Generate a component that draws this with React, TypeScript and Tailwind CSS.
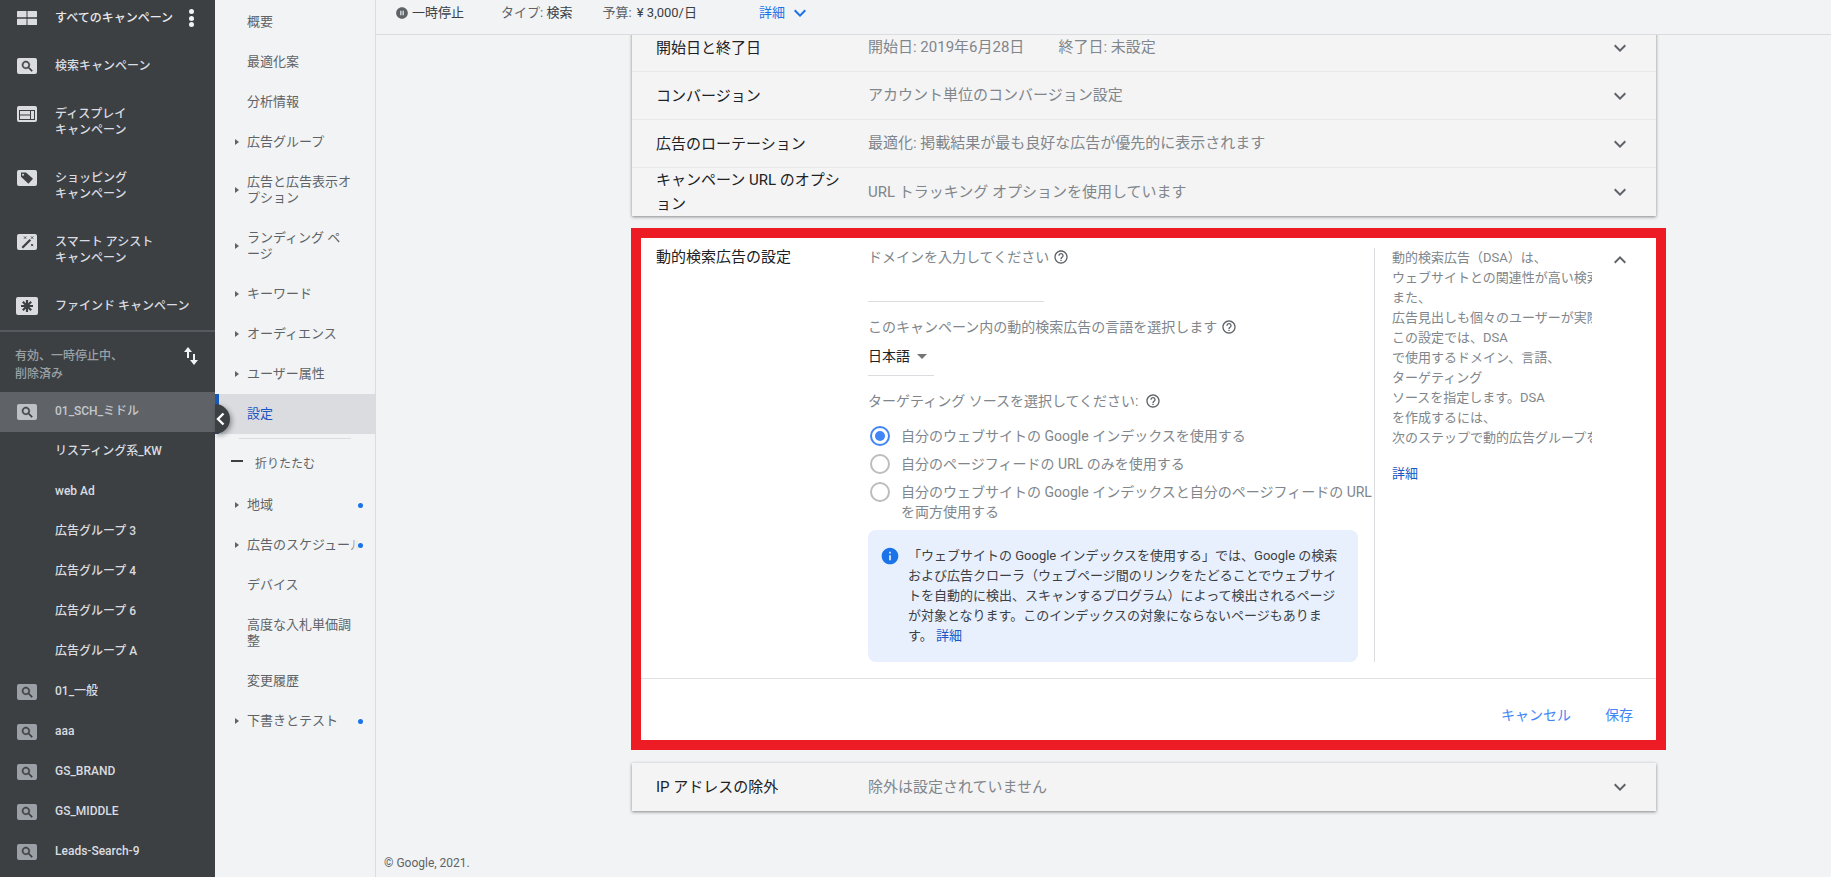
import React from "react";

const SEARCH = "M15.5 14h-.79l-.28-.27C15.41 12.59 16 11.11 16 9.5 16 5.91 13.09 3 9.5 3S3 5.91 3 9.5 5.91 16 9.5 16c1.61 0 3.09-.59 4.23-1.57l.27.28v.79l5 4.99L20.49 19l-4.99-5zm-6 0C7.01 14 5 11.99 5 9.5S7.01 5 9.5 5 14 7.01 14 9.5 11.99 14 9.5 14z";
const HELP = "M11 18h2v-2h-2v2zm1-16C6.48 2 2 6.48 2 12s4.48 10 10 10 10-4.48 10-10S17.52 2 12 2zm0 18c-4.41 0-8-3.59-8-8s3.59-8 8-8 8 3.59 8 8-3.59 8-8 8zm0-14c-2.21 0-4 1.79-4 4h2c0-1.1.9-2 2-2s2 .9 2 2c0 2-3 1.75-3 5h2c0-2.25 3-2.5 3-5 0-2.21-1.79-4-4-4z";
const CHEV = "M7.41 8.59L12 13.17l4.59-4.58L18 10l-6 6-6-6z";

function Chip({ color = "#dadce0", children }: { color?: string; children: React.ReactNode }) {
  return (
    <svg width="20" height="16" viewBox="0 0 20 16" className="shrink-0">
      <rect width="20" height="16" rx="2" fill={color} />
      {children}
    </svg>
  );
}

function SearchChip({ color }: { color?: string }) {
  return (
    <Chip color={color}>
      <g transform="translate(3.2,1.2) scale(0.6)">
        <path d={SEARCH} fill="#3c4043" stroke="#3c4043" strokeWidth="0.8" />
      </g>
    </Chip>
  );
}

function GridIcon() {
  return (
    <svg width="20" height="14" viewBox="0 0 20 14" className="shrink-0">
      <rect width="9.5" height="6.2" rx="0.5" fill="#dadce0" />
      <rect x="10.5" width="9.5" height="6.2" rx="0.5" fill="#dadce0" />
      <rect y="7.8" width="9.5" height="6.2" rx="0.5" fill="#dadce0" />
      <rect x="10.5" y="7.8" width="9.5" height="6.2" rx="0.5" fill="#dadce0" />
    </svg>
  );
}

function DisplayIcon() {
  return (
    <Chip>
      <rect x="2" y="4" width="16" height="10" fill="#3c4043" />
      <rect x="3" y="5" width="10" height="3.5" fill="#dadce0" />
      <rect x="3" y="9.5" width="10" height="3.5" fill="#dadce0" />
      <rect x="14" y="5" width="3" height="8" fill="#dadce0" />
    </Chip>
  );
}

function TagIcon() {
  return (
    <Chip>
      <path d="M4 2.500h5l7 6.200-4.600 5L4 6.800z" fill="#3c4043" />
      <circle cx="6" cy="4.800" r="1" fill="#dadce0" />
    </Chip>
  );
}

function WandIcon() {
  return (
    <Chip>
      <path d="M4.500 13 12.500 5l1.600 1.600-8 8z" fill="#3c4043" />
      <path d="M7 2.500l2.200 2.200M9.200 2.500 7 4.700M14 2.500l2.200 2.200M16.200 2.500 14 4.700M14 10l2.200 2.200M16.200 10 14 12.200" stroke="#3c4043" strokeWidth="0.9" />
    </Chip>
  );
}

function AsteriskIcon() {
  return (
    <svg width="22" height="18" viewBox="0 0 22 18" className="shrink-0 -ml-px">
      <rect width="22" height="18" rx="2" fill="#dadce0" />
      <path d="M11 3v12M5 9h12M6.800 4.800l8.400 8.400M15.200 4.800l-8.400 8.400" stroke="#3c4043" strokeWidth="2.200" />
    </svg>
  );
}

function NavRow({ icon, className = "", text, h = "h-[40px]", sel = false, top = false, lift = false }: { icon?: React.ReactNode; className?: string; text: React.ReactNode; h?: string; sel?: boolean; top?: boolean; lift?: boolean }) {
  return (
    <div className={`flex items-center pl-[17px] ${h} ${sel ? "bg-[#5f6368] text-[#c4c7cb]" : "text-[#dadce0]"} ${className}`}>
      <div className={`w-[38px] shrink-0 flex items-center ${top ? "self-start mt-[17px]" : ""}`}>{icon}</div>
      <div className={`text-[12px] leading-[16px] font-medium ${top ? "pt-[2px]" : ""} ${lift ? "pb-[2px]" : ""}`}>{text}</div>
    </div>
  );
}

function Sidebar() {
  return (
    <div className="w-[215px] shrink-0 bg-[#3c4043] h-full overflow-hidden">
      <div className="relative flex items-center pl-[17px] h-[36px] text-[#e8eaed]">
        <div className="w-[38px] shrink-0 flex items-center"><GridIcon /></div>
        <div className="text-[12px] leading-[16px] font-medium">すべてのキャンペーン</div>
        <div className="ml-[16px] flex flex-col gap-[1.5px]">
          <div className="w-[5px] h-[5px] rounded-full bg-[#f1f3f4]" />
          <div className="w-[5px] h-[5px] rounded-full bg-[#f1f3f4]" />
          <div className="w-[5px] h-[5px] rounded-full bg-[#f1f3f4]" />
        </div>
      </div>
      <NavRow className="mt-[10px]" icon={<SearchChip />} text="検索キャンペーン" />
      <NavRow className="mt-[3px]" top h="h-[64px]" icon={<DisplayIcon />} text={<>ディスプレイ<br />キャンペーン</>} />
      <NavRow top h="h-[64px]" icon={<TagIcon />} text={<>ショッピング<br />キャンペーン</>} />
      <NavRow top h="h-[64px]" icon={<WandIcon />} text={<>スマート アシスト<br />キャンペーン</>} />
      <NavRow className="mt-[1px]" h="h-[47px]" icon={<AsteriskIcon />} text="ファインド キャンペーン" />
      <div className="h-[2px] mt-[1px] bg-[#5f6368] opacity-70" />
      <div className="h-[60px] pl-[15px] pr-[17px] pt-[15px] flex justify-between text-[12px] leading-[18px] text-[#9aa0a6] font-medium">
        <div>有効、一時停止中、<br />削除済み</div>
        <svg width="14" height="18" viewBox="0 0 14 18">
          <path d="M4 0 0 5h3v6h2V5h3zM10 18l4-5h-3V7H9v6H6z" fill="#f1f3f4" />
        </svg>
      </div>
      <NavRow lift sel icon={<SearchChip color="#bdc1c6" />} text="01_SCH_ミドル" />
      <NavRow lift text="リスティング系_KW" />
      <NavRow lift text="web Ad" />
      <NavRow lift text="広告グループ 3" />
      <NavRow lift text="広告グループ 4" />
      <NavRow lift text="広告グループ 6" />
      <NavRow lift text="広告グループ A" />
      <NavRow lift icon={<SearchChip color="#9aa0a6" />} text="01_一般" />
      <NavRow lift icon={<SearchChip color="#9aa0a6" />} text="aaa" />
      <NavRow lift icon={<SearchChip color="#9aa0a6" />} text="GS_BRAND" />
      <NavRow lift icon={<SearchChip color="#9aa0a6" />} text="GS_MIDDLE" />
      <NavRow lift icon={<SearchChip color="#9aa0a6" />} text="Leads-Search-9" />
    </div>
  );
}

function SubRow({ text, arrow = false, h = "h-[40px]", dot = false, clip = false }: { text: React.ReactNode; arrow?: boolean; h?: string; dot?: boolean; clip?: boolean }) {
  return (
    <div className={`relative flex items-center pl-[20px] pr-[24px] ${h}`}>
      <div className="w-[12px] shrink-0 flex items-center">
        {arrow && <div className="w-0 h-0 border-y-[3px] border-y-transparent border-l-[4px] border-l-[#5f6368]" />}
      </div>
      <div className={`text-[13px] leading-[16px] text-[#5f6368] ${clip ? "relative shrink-0 whitespace-nowrap overflow-hidden w-[111px]" : ""}`}>
        {text}
        {clip && <div className="absolute right-0 top-0 h-full w-[8px] bg-gradient-to-r from-transparent to-[#f1f3f4]" />}
      </div>
      {dot && <div className="absolute left-[143px] top-[18px] w-[5px] h-[5px] rounded-full bg-[#1a73e8]" />}
    </div>
  );
}

function SubNav() {
  return (
    <div className="relative w-[161px] shrink-0 h-full bg-[#f1f3f4] border-r border-[#dadce0] pt-[2px]">
      <SubRow text="概要" />
      <SubRow text="最適化案" />
      <SubRow text="分析情報" />
      <SubRow arrow text="広告グループ" />
      <SubRow arrow h="h-[56px]" text="広告と広告表示オプション" />
      <SubRow arrow h="h-[56px]" text="ランディング ページ" />
      <SubRow arrow text="キーワード" />
      <SubRow arrow text="オーディエンス" />
      <SubRow arrow text="ユーザー属性" />
      <div className="relative h-[40px] bg-[#dadce0] flex items-center pl-[32px] text-[13px] text-[#1a56c4]">
        <div className="absolute left-0 top-0 h-full w-[4px] bg-[#185abc]" />
        設定
      </div>
      <div className="mt-[4px] ml-[24px] w-[112px] h-px bg-[#dadce0]" />
      <div className="h-[41px] mt-[5px] flex items-center pl-[16px] pb-[1px] text-[12px] text-[#5f6368]">
        <div className="w-[12px] h-[2px] -mt-[6px] bg-[#3c4043] mr-[12px]" />
        折りたたむ
      </div>
      <SubRow arrow dot text="地域" />
      <SubRow arrow dot clip text="広告のスケジュール" />
      <SubRow text="デバイス" />
      <SubRow h="h-[56px]" text="高度な入札単価調整" />
      <SubRow text="変更履歴" />
      <SubRow arrow dot text="下書きとテスト" />
      <div className="absolute left-0 top-[404px] w-[15px] h-[30px] rounded-r-[15px] bg-[#3c4043] shadow-[2px_2px_5px_rgba(0,0,0,0.35)] flex items-center justify-start">
        <svg width="11" height="14" viewBox="0 0 11 14"><path d="M8.500 1.500 3 7l5.500 5.500" fill="none" stroke="#fff" strokeWidth="2.400" /></svg>
      </div>
    </div>
  );
}

function Chevron({ up = false }: { up?: boolean }) {
  return (
    <svg width="24" height="24" viewBox="0 0 24 24" className={`shrink-0 ${up ? "rotate-180" : ""}`}>
      <path d={CHEV} fill="#5f6368" />
    </svg>
  );
}

function Help() {
  return (
    <svg width="16" height="16" viewBox="0 0 24 24" className="inline-block shrink-0 ml-[4px] align-[-3px]">
      <path d={HELP} fill="#5f6368" />
    </svg>
  );
}

function CardRow({ title, value, className = "" }: { title: React.ReactNode; value: React.ReactNode; className?: string }) {
  return (
    <div className={`flex items-center h-[48px] bg-[#f4f4f5] border-b border-[#e8e8e8] pl-[24px] pr-[24px] ${className}`}>
      <div className="w-[212px] pr-[20px] shrink-0 text-[15px] leading-[24px] text-[#202124]">{title}</div>
      <div className="flex-1 text-[15px] text-[#80868b]">{value}</div>
      <Chevron />
    </div>
  );
}

function Radio({ on = false, label }: { on?: boolean; label: string }) {
  return (
    <div className="flex items-start py-[4px] pl-[2px]">
      <div className={`w-[20px] h-[20px] rounded-full border-2 shrink-0 flex items-center justify-center ${on ? "border-[#4285f4]" : "border-[#bdbdbd]"}`}>
        {on && <div className="w-[10px] h-[10px] rounded-full bg-[#4285f4]" />}
      </div>
      <div className="ml-[11px] w-[473px] text-[14px] leading-[20px] text-[#80868b]">{label}</div>
    </div>
  );
}

const HELP_LINES = [
  "動的検索広告（DSA）は、",
  "ウェブサイトとの関連性が高い検索語句に広告を表示します。",
  "また、",
  "広告見出しも個々のユーザーが実際に検索した語句に合わせて生成されます。",
  "この設定では、DSA",
  "で使用するドメイン、言語、",
  "ターゲティング",
  "ソースを指定します。DSA",
  "を作成するには、",
  "次のステップで動的広告グループを作成します。",
];

function Main() {
  return (
    <div className="relative flex-1 min-w-0 h-full flex flex-col">
      <div className="h-[35px] shrink-0 bg-[#f1f3f4] border-b border-[#dadce0] relative z-10 flex items-center pl-[20px] pb-[9px] text-[13px] leading-[16px] text-[#5f6368]">
        <svg width="14" height="14" viewBox="0 0 24 24" className="shrink-0 -ml-px"><path d="M12 2C6.480 2 2 6.480 2 12s4.480 10 10 10 10-4.480 10-10S17.520 2 12 2zm-1 14H9V8h2v8zm4 0h-2V8h2v8z" fill="#5f6368" /></svg>
        <span className="ml-[3px] text-[#3c4043]">一時停止</span>
        <span className="ml-[37px]">タイプ: <span className="text-[#3c4043]">検索</span></span>
        <span className="ml-[30px]">予算: <span className="text-[#3c4043] ml-[2px]">¥ 3,000/日</span></span>
        <span className="ml-[62px] text-[#1a73e8]">詳細</span>
        <svg width="24" height="24" viewBox="0 0 24 24" className="ml-[3px] shrink-0"><path d={CHEV} fill="#1a73e8" /></svg>
      </div>

      <div className="flex-1 min-h-0 overflow-hidden flex flex-col">
        <div className="ml-[256px] w-[1024px] -mt-[11px] shadow-[0_1px_3px_rgba(60,64,67,0.6)]">
          <CardRow title="開始日と終了日" value={<>開始日: 2019年6月28日<span className="ml-[34px]">終了日: 未設定</span></>} />
          <CardRow title="コンバージョン" value="アカウント単位のコンバージョン設定" />
          <CardRow title="広告のローテーション" value="最適化: 掲載結果が最も良好な広告が優先的に表示されます" />
          <CardRow className="border-b-0" title="キャンペーン URL のオプション" value="URL トラッキング オプションを使用しています" />
        </div>

        <div className="ml-[255px] mt-[12px] w-[1035px] border-[10px] border-[#ed1c24] bg-white">
          <div className="flex pt-[10px] pb-[16px]">
            <div className="w-[227px] shrink-0 pl-[15px] -mt-[3px] text-[15px] leading-[24px] text-[#202124]">動的検索広告の設定</div>
            <div className="w-[506px] shrink-0 -mt-px">
              <div className="text-[14px] leading-[20px] text-[#80868b]">ドメインを入力してください<Help /></div>
              <div className="w-[176px] h-[35px] border-b border-[#dadce0]" />
              <div className="mt-[15px] text-[14px] leading-[20px] text-[#80868b]">このキャンペーン内の動的検索広告の言語を選択します<Help /></div>
              <div className="mt-[9px] w-[66px] pb-[9px] border-b border-[#dadce0] flex items-center text-[14px] leading-[20px] text-[#202124]">
                日本語
                <div className="ml-[7px] w-0 h-0 border-x-[5px] border-x-transparent border-t-[5px] border-t-[#757575]" />
              </div>
              <div className="mt-[15px] text-[14px] leading-[20px] text-[#80868b]">ターゲティング ソースを選択してください:<span className="ml-[3px]" /><Help /></div>
              <div className="mt-[11px]">
                <Radio on label="自分のウェブサイトの Google インデックスを使用する" />
                <Radio label="自分のページフィードの URL のみを使用する" />
                <Radio label="自分のウェブサイトの Google インデックスと自分のページフィードの URL を両方使用する" />
              </div>
              <div className="mt-[4px] w-[490px] h-[132px] rounded-[8px] bg-[#e8f0fe] flex pl-[14px] pr-[20px] py-[16px]">
                <svg width="20" height="20" viewBox="0 0 24 24" className="shrink-0 -ml-[2px] mr-[8px]"><path d="M12 2C6.480 2 2 6.480 2 12s4.480 10 10 10 10-4.480 10-10S17.520 2 12 2zm1 15h-2v-6h2v6zm0-8h-2V7h2v2z" fill="#1a73e8" /></svg>
                <div className="text-[13px] leading-[20px] text-[#3c4043]">
                  「ウェブサイトの Google インデックスを使用する」では、Google の検索および広告クローラ（ウェブページ間のリンクをたどることでウェブサイトを自動的に検出、スキャンするプログラム）によって検出されるページが対象となります。このインデックスの対象にならないページもあります。 <span className="text-[#1a56c4]">詳細</span>
                </div>
              </div>
            </div>
            <div className="w-px shrink-0 bg-[#dadce0]" />
            <div className="ml-[17px] w-[200px] shrink-0 overflow-hidden text-[13px] leading-[20px] text-[#80868b] whitespace-nowrap">
              {HELP_LINES.map((l) => <div key={l}>{l}</div>)}
              <div className="mt-[16px] text-[#1a56c4]">詳細</div>
            </div>
            <div className="ml-[16px]"><Chevron up /></div>
          </div>
          <div className="h-[62px] border-t border-[#e0e0e0] flex items-center justify-end pr-[23px] pt-[12px] text-[14px] text-[#4285f4]">
            <span>キャンセル</span>
            <span className="ml-[34px]">保存</span>
          </div>
        </div>

        <div className="ml-[256px] mt-[13px] w-[1024px] shadow-[0_1px_3px_rgba(60,64,67,0.6)]">
          <CardRow className="border-b-0" title="IP アドレスの除外" value="除外は設定されていません" />
        </div>

        <div className="mt-auto pl-[8px] pb-[7px] text-[12px] leading-[14px] text-[#5f6368]">© Google, 2021.</div>
      </div>
    </div>
  );
}

export default function App() {
  return (
    <div className="flex w-[1831px] h-[877px] overflow-hidden bg-[#f1f3f4] font-['Roboto','Noto_Sans_CJK_JP',sans-serif]">
      <Sidebar />
      <SubNav />
      <Main />
    </div>
  );
}
